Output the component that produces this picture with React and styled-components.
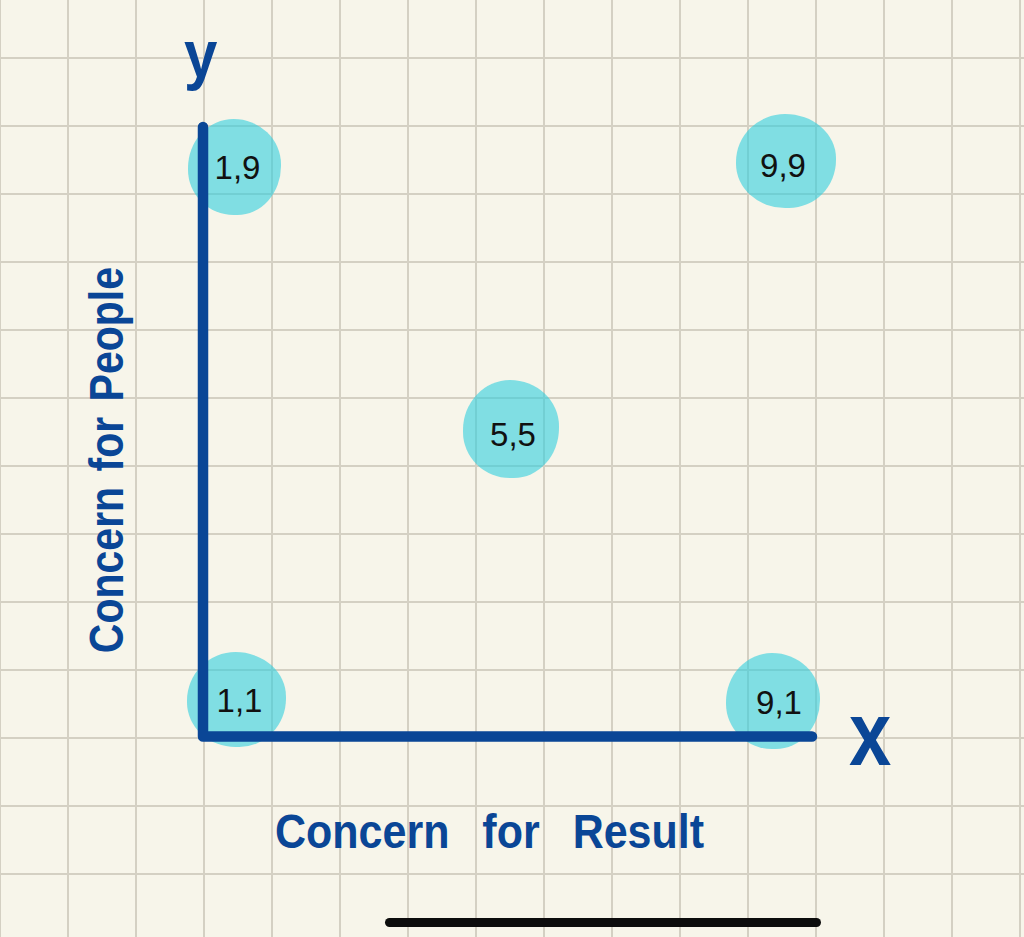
import styled, { createGlobalStyle } from 'styled-components';

const GlobalStyle = createGlobalStyle`
    html, body {
        margin: 0;
        padding: 0;
        background: #f7f5ea;
    }
`

const INK = '#0a4696';
const HAND = '"Liberation Sans", Arial, sans-serif';

const Page = styled.div`
    width: 1024px;
    height: 937px;
    overflow: hidden;
    display: flex;
    flex-direction: column;
    background-color: #f7f5ea;
    background-image:
        linear-gradient(to right, #d4d0c3 0 2px, transparent 2px),
        linear-gradient(to bottom, #d4d0c3 0 2px, transparent 2px);
    background-size: 68px 68px;
    background-position: -1px -11px;
`

const AxisMark = styled.span`
    font-family: ${HAND};
    font-weight: 700;
    font-size: ${p => p.$size}px;
    line-height: 1;
    color: ${INK};
    transform-origin: left top;
    transform: scaleY(${p => p.$stretch});
`

const YMark = styled(AxisMark)`
    align-self: flex-start;
    margin: 21px 0 0 184px;
`

const XMark = styled(AxisMark)`
    position: absolute;
    left: 709px;
    top: 588px;
`

const ChartRow = styled.div`
    display: flex;
    align-items: flex-start;
    gap: 12px;
    margin: 19px 0 0 87px;
`

const SideLabel = styled.span`
    margin-top: 167px;
    writing-mode: vertical-rl;
    transform: rotate(180deg) scaleX(1.15);
    font-family: ${HAND};
    font-weight: 700;
    font-size: 41px;
    line-height: 1;
    word-spacing: 4px;
    white-space: nowrap;
    color: ${INK};
`

const Plot = styled.div`
    position: relative;
    width: 780px;
    height: 680px;
`

const Point = styled.div`
    position: absolute;
    left: ${p => p.$left}px;
    top: ${p => p.$top}px;
    width: ${p => p.$w}px;
    height: ${p => p.$h}px;
    border-radius: 50% 52% 48% 50% / 52% 48% 52% 48%;
    background: rgba(48, 206, 222, 0.6);
    display: flex;
    align-items: center;
    justify-content: center;
`

const Coord = styled.span`
    font-family: "Liberation Sans", Arial, sans-serif;
    font-size: 33px;
    line-height: 1;
    color: #111;
    transform: translate(${p => p.$dx}px, ${p => p.$dy}px);
`

const Axes = styled.svg`
    position: absolute;
    inset: 0;
    width: 100%;
    height: 100%;
    pointer-events: none;
`

const BottomLabel = styled.span`
    align-self: flex-start;
    margin: 28px 0 0 275px;
    font-family: ${HAND};
    font-weight: 700;
    font-size: 43px;
    line-height: 1;
    word-spacing: 21px;
    white-space: nowrap;
    color: ${INK};
    transform-origin: left top;
    transform: scaleY(1.12);
`

const HomeBar = styled.div`
    margin: auto 0 10px 385px;
    width: 436px;
    height: 9px;
    border-radius: 5px;
    background: #0c0c0c;
`

// plot coordinates: origin at page (140, 100)
const points = [
    { label: '1,9', left: 48, top: 19, w: 93, h: 96, dx: 3, dy: 0 },
    { label: '9,9', left: 596, top: 14, w: 100, h: 94, dx: -3, dy: 4 },
    { label: '5,5', left: 323, top: 280, w: 96, h: 98, dx: 2, dy: 5 },
    { label: '1,1', left: 47, top: 552, w: 99, h: 95, dx: 3, dy: 1 },
    { label: '9,1', left: 586, top: 553, w: 94, h: 96, dx: 6, dy: 1 },
]

export default function App(){
    return(
        <Page>
            <GlobalStyle />
            <YMark $size={60} $stretch={1.12}>y</YMark>
            <ChartRow>
                <SideLabel>Concern for People</SideLabel>
                <Plot>
                    {points.map(pt => (
                        <Point key={pt.label} $left={pt.left} $top={pt.top} $w={pt.w} $h={pt.h}>
                            <Coord $dx={pt.dx} $dy={pt.dy}>{pt.label}</Coord>
                        </Point>
                    ))}
                    <Axes viewBox="0 0 780 680">
                        <path
                            d="M63 27 V636.5 H672"
                            fill="none"
                            stroke={INK}
                            strokeWidth="10.5"
                            strokeLinecap="round"
                            strokeLinejoin="round"
                        />
                    </Axes>
                    <XMark $size={76} $stretch={1.2}>x</XMark>
                </Plot>
            </ChartRow>
            <BottomLabel>Concern for Result</BottomLabel>
            <HomeBar />
        </Page>
    )
}
